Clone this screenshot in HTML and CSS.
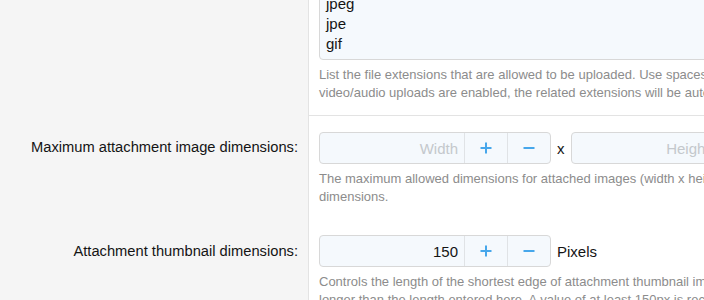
FILE: index.html
```html
<!DOCTYPE html>
<html>
<head>
  <title>Attachment options</title>
  <meta name="viewport" content="width=device-width, initial-scale=1.0">
  <link rel="stylesheet" href="styles.css">
</head>
<body>
  <div class="page">
    <dl class="form-row">
      <dt></dt>
      <dd>
        <textarea class="input ext-list" rows="5" readonly>png
jpg
jpeg
jpe
gif</textarea>
        <div class="explain">List the file extensions that are allowed to be uploaded. Use spaces or line breaks between extensions. When<br>video/audio uploads are enabled, the related extensions will be automatically added.</div>
      </dd>
    </dl>
    <dl class="form-row separated">
      <dt><label>Maximum attachment image dimensions:</label></dt>
      <dd>
        <div class="input-line">
          <div class="number-box">
            <input type="text" class="number" placeholder="Width">
            <button type="button" class="step">
              <svg width="12" height="12" viewBox="0 0 12 12"><path d="M6 0.5v11M0.5 6h11"/></svg>
            </button>
            <button type="button" class="step">
              <svg width="12" height="12" viewBox="0 0 12 12"><path d="M0.5 6h11"/></svg>
            </button>
          </div>
          <span class="joiner">x</span>
          <div class="number-box">
            <input type="text" class="number" placeholder="Height">
            <button type="button" class="step">
              <svg width="12" height="12" viewBox="0 0 12 12"><path d="M6 0.5v11M0.5 6h11"/></svg>
            </button>
            <button type="button" class="step">
              <svg width="12" height="12" viewBox="0 0 12 12"><path d="M0.5 6h11"/></svg>
            </button>
          </div>
        </div>
        <div class="explain">The maximum allowed dimensions for attached images (width x height) in pixels. Larger images will be resized to fit these<br>dimensions.</div>
      </dd>
    </dl>
    <dl class="form-row">
      <dt><label>Attachment thumbnail dimensions:</label></dt>
      <dd>
        <div class="input-line">
          <div class="number-box">
            <input type="text" class="number" value="150">
            <button type="button" class="step">
              <svg width="12" height="12" viewBox="0 0 12 12"><path d="M6 0.5v11M0.5 6h11"/></svg>
            </button>
            <button type="button" class="step">
              <svg width="12" height="12" viewBox="0 0 12 12"><path d="M0.5 6h11"/></svg>
            </button>
          </div>
          <span class="joiner">Pixels</span>
        </div>
        <div class="explain">Controls the length of the shortest edge of attachment thumbnail images. The longest edge will be scaled proportionally and may be<br>longer than the length entered here. A value of at least 150px is recommended.</div>
      </dd>
    </dl>
  </div>
</body>
</html>
```

FILE: styles.css
```css
html, body {
  margin: 0;
  padding: 0;
  background: #fff;
  color: #141414;
  font-family: "Liberation Sans", Arial, sans-serif;
  overflow: hidden;
}
/* page is scrolled down a little, so the first row starts above the top */
.page {
  width: 1100px;
  margin-top: -68px;
}
.form-row {
  display: flex;
  margin: 0;
}
.form-row > dt {
  width: 298px;
  flex: none;
  margin: 0;
  padding: 16px 10px 0 0;
  background: #f5f5f5;
  border-right: 1px solid #e3e3e3;
  text-align: right;
  font-size: 14.7px;
  line-height: 32px;
}
.form-row > dd {
  flex: 1;
  margin: 0;
  padding: 16px 10px 13px;
}
.form-row.separated > dd {
  border-top: 1px solid #e3e3e3;
}
.input {
  font-family: "Liberation Sans", Arial, sans-serif;
  font-size: 15px;
  color: #141414;
  background: #f5f9fd;
  border: 1px solid #d8d8d8;
  border-radius: 4px;
  box-sizing: border-box;
}
.ext-list {
  display: block;
  width: 100%;
  height: 112px;
  padding: 5px 6px;
  line-height: 20px;
  resize: none;
  overflow: hidden;
  outline: none;
}
.explain {
  margin-top: 6px;
  font-size: 13px;
  line-height: 18px;
  color: #8c8c8c;
  white-space: nowrap;
}
.input-line {
  display: flex;
  align-items: center;
  gap: 6px;
}
.number-box {
  display: flex;
  width: 232px;
  height: 32px;
  box-sizing: border-box;
  border: 1px solid #d8d8d8;
  border-radius: 4px;
  background: #f5f9fd;
  overflow: hidden;
}
.number {
  width: 144px;
  flex: none;
  border: 0;
  background: transparent;
  padding: 0 6px;
  box-sizing: border-box;
  text-align: right;
  font-family: "Liberation Sans", Arial, sans-serif;
  font-size: 15px;
  color: #141414;
  outline: none;
}
.number::placeholder {
  color: #c4c8cc;
}
.step {
  flex: 1;
  display: flex;
  align-items: center;
  justify-content: center;
  padding: 0;
  border: 0;
  border-left: 1px solid #e0e3e6;
  background: transparent;
  cursor: pointer;
}
.step svg {
  stroke: #47a7eb;
  stroke-width: 2;
  fill: none;
}
.joiner {
  font-size: 15px;
  color: #141414;
}
```
